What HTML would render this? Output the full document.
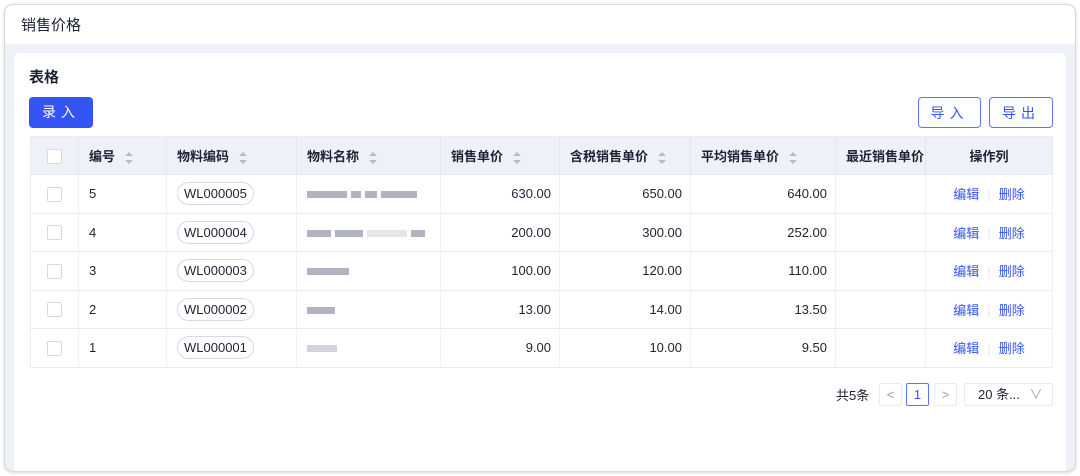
<!DOCTYPE html>
<html><head><meta charset="utf-8"><style>
*{box-sizing:border-box;margin:0;padding:0}
body{width:1080px;height:476px;background:#fff;font-family:"Liberation Sans","Noto Sans CJK SC",sans-serif;color:#1d2335;position:relative;overflow:hidden}
.win{position:absolute;left:5px;top:5px;width:1070px;height:466px;border-radius:8px;background:#eef2f8;box-shadow:0 0 0 1px #d6d8dc,0 1px 4px rgba(0,0,0,.25);overflow:hidden}
.hdr{position:absolute;left:0;top:0;width:100%;height:39px;background:#fff;font-size:15px;padding:9px 0 0 16px;color:#1d2335}
.card{position:absolute;left:9px;top:48px;width:1052px;height:420px;background:#fff;border-radius:6px}
.t{position:absolute;left:15px;top:13px;font-size:15px;font-weight:bold}
.btn{position:absolute;height:31px;border-radius:4px;font-size:14px;text-align:center;line-height:30px;letter-spacing:5px}
.b1{left:15px;top:44px;width:64px;background:#3554f5;color:#fff}
.b2{left:904px;top:44px;width:63px;border:1px solid #5a74f5;color:#3554f5}
.b3{left:975px;top:44px;width:64px;border:1px solid #5a74f5;color:#3554f5}
table{position:absolute;left:16px;top:83px;border-collapse:collapse;font-size:13px;table-layout:fixed;border:1px solid #e8ebf0}
th{height:38px;background:#eef2f8;text-align:left;font-weight:bold;padding-left:10px;border-right:1px solid #e3e7ee;white-space:nowrap;overflow:hidden}
td{height:38.5px;border-top:1px solid #e8ebf0;border-right:1px solid #eef0f4;padding:0 8px 0 10px}
.r{text-align:right}
.s{display:inline-block;margin-left:10px;vertical-align:middle;width:8px;height:12px;position:relative}
.s:before,.s:after{content:"";position:absolute;left:0;border-left:4px solid transparent;border-right:4px solid transparent}
.s:before{top:0;border-bottom:4px solid #b8bcc6}.s:after{bottom:0;border-top:4px solid #b8bcc6}
.cb{display:inline-block;width:15px;height:15px;border:1px solid #d6d9e0;border-radius:2px;background:#fff;vertical-align:middle}
.tag{display:inline-block;border:1px solid #d6d9e0;border-radius:12px;padding:3px 6px;font-size:13px}
.a{color:#3554f5;text-align:center;padding:0}
.a i{font-style:normal;color:#e3e6ec;margin:0 8px}
.bl{display:inline-block;height:7px;background:#7d8197;opacity:.6;margin-right:4px;vertical-align:middle}
.pg{position:absolute;top:332px;font-size:13px}
.pb{position:absolute;top:330px;width:23px;height:23px;border:1px solid #e8ebf0;border-radius:2px;text-align:center;line-height:21px;color:#9aa0ad;font-size:13px}
</style></head><body>
<div class="win">
<div class="hdr">销售价格</div>
<div class="card">
<div class="t">表格</div>
<div class="btn b1">录入</div>
<div class="btn b2">导入</div>
<div class="btn b3">导出</div>
<table>
<colgroup><col style="width:48px"><col style="width:88px"><col style="width:130px"><col style="width:144px"><col style="width:119px"><col style="width:131px"><col style="width:145px"><col style="width:90px"><col style="width:127px"></colgroup>
<tr><th style="text-align:center;padding:0"><span class="cb"></span></th><th>编号<span class="s"></span></th><th>物料编码<span class="s"></span></th><th>物料名称<span class="s"></span></th><th>销售单价<span class="s"></span></th><th>含税销售单价<span class="s"></span></th><th>平均销售单价<span class="s"></span></th><th>最近销售单价</th><th style="text-align:center;padding:0;box-shadow:-4px 0 6px rgba(0,0,0,.05)">操作列</th></tr>
<tr><td style="text-align:center;padding:0"><span class="cb"></span></td><td>5</td><td><span class="tag">WL000005</span></td><td><span class="bl" style="width:40px"></span><span class="bl" style="width:10px"></span><span class="bl" style="width:12px"></span><span class="bl" style="width:36px"></span></td><td class="r">630.00</td><td class="r">650.00</td><td class="r">640.00</td><td></td><td class="a">编辑<i>|</i>删除</td></tr>
<tr><td style="text-align:center;padding:0"><span class="cb"></span></td><td>4</td><td><span class="tag">WL000004</span></td><td><span class="bl" style="width:24px"></span><span class="bl" style="width:28px"></span><span class="bl" style="width:40px;opacity:.2"></span><span class="bl" style="width:14px"></span></td><td class="r">200.00</td><td class="r">300.00</td><td class="r">252.00</td><td></td><td class="a">编辑<i>|</i>删除</td></tr>
<tr><td style="text-align:center;padding:0"><span class="cb"></span></td><td>3</td><td><span class="tag">WL000003</span></td><td><span class="bl" style="width:42px"></span></td><td class="r">100.00</td><td class="r">120.00</td><td class="r">110.00</td><td></td><td class="a">编辑<i>|</i>删除</td></tr>
<tr><td style="text-align:center;padding:0"><span class="cb"></span></td><td>2</td><td><span class="tag">WL000002</span></td><td><span class="bl" style="width:28px"></span></td><td class="r">13.00</td><td class="r">14.00</td><td class="r">13.50</td><td></td><td class="a">编辑<i>|</i>删除</td></tr>
<tr><td style="text-align:center;padding:0"><span class="cb"></span></td><td>1</td><td><span class="tag">WL000001</span></td><td><span class="bl" style="width:30px;opacity:.35"></span></td><td class="r">9.00</td><td class="r">10.00</td><td class="r">9.50</td><td></td><td class="a">编辑<i>|</i>删除</td></tr>
</table>
<div class="pg" style="left:822px">共5条</div>
<div class="pb" style="left:865px">&lt;</div>
<div class="pb" style="left:892px;border-color:#5a74f5;color:#3554f5">1</div>
<div class="pb" style="left:920px">&gt;</div>
<div class="pb" style="left:950px;width:89px;color:#1d2335;text-align:left;padding-left:13px">20 条... <span style="color:#9aa0ad;margin-left:6px">∨</span></div>
</div>
</div>
</body></html>
